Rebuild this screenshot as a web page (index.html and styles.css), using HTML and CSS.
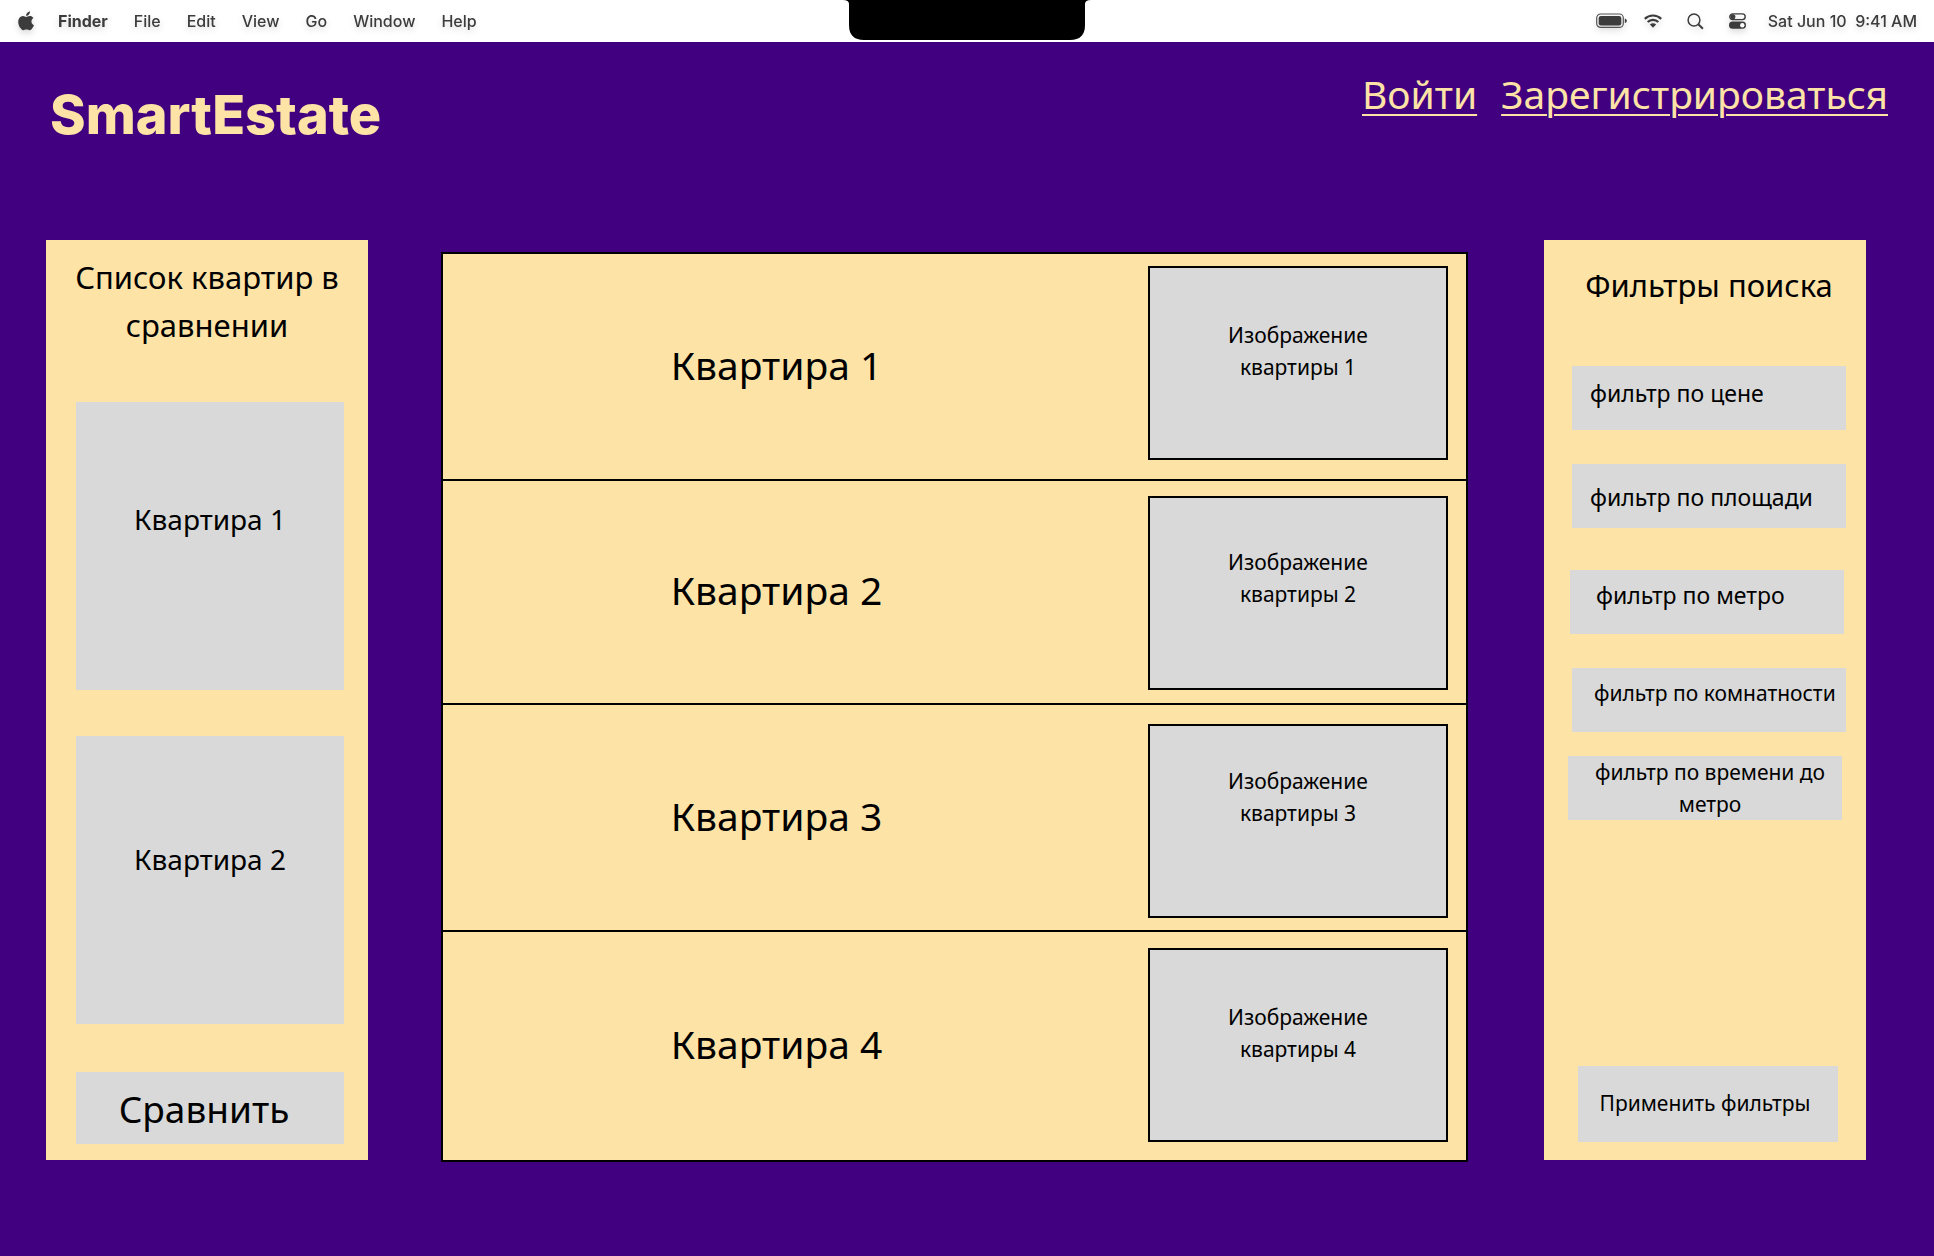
FILE: index.html
```html
<!DOCTYPE html>
<html lang="ru">
<head>
<meta charset="utf-8">
<meta name="viewport" content="width=device-width, initial-scale=1">
<title>SmartEstate</title>
<link rel="stylesheet" href="styles.css">
</head>
<body>
<div class="menubar">
  <nav class="menubar-menu" aria-label="Menu">
    <svg class="icon-apple" viewBox="0 0 16 20" aria-hidden="true"><path d="M13.3 10.7c0-1.9 1.5-2.8 1.6-2.9-.9-1.3-2.3-1.5-2.8-1.5-1.200-.1-2.300.7-2.900.7s-1.500-.7-2.500-.7c-1.300 0-2.500.8-3.100 1.900-1.400 2.300-.4 5.800.9 7.700.7.9 1.400 2 2.400 1.900 1 0 1.300-.6 2.500-.6s1.500.6 2.500.6 1.700-.9 2.300-1.900c.8-1.100 1-2.100 1.100-2.200 0 0-2-.8-2-3zM11.400 5c.5-.6.9-1.500.8-2.400-.8 0-1.700.5-2.300 1.200-.5.6-.9 1.500-.8 2.300.9.1 1.800-.4 2.300-1.100z" transform="matrix(1.270 0 0 1.230 -3.500 -2.700)"/></svg>
    <button class="menu-item menu-item-app">Finder</button>
    <button class="menu-item">File</button>
    <button class="menu-item">Edit</button>
    <button class="menu-item">View</button>
    <button class="menu-item">Go</button>
    <button class="menu-item">Window</button>
    <button class="menu-item">Help</button>
  </nav>
  <svg class="notch" viewBox="0 0 248 40" aria-hidden="true"><path d="M0 0H248Q242 0 242 4V25Q242 40 227 40H21Q6 40 6 25V4Q6 0 0 0Z"/></svg>
  <div class="menubar-status">
    <svg class="icon-battery" viewBox="0 0 31 16" aria-hidden="true"><rect x=".7" y="1" width="26.600" height="13.400" rx="4" fill="none" stroke="#555" stroke-width="1.200"/><rect x="2.700" y="3" width="22.600" height="9.400" rx="2.200"/><path d="M28.800 5.400c1.500.4 2 1.300 2 2.300s-.5 1.900-2 2.300z"/></svg>
    <svg class="icon-wifi" viewBox="0 0 18 14" aria-hidden="true"><g fill="none" stroke="#3c3c3c" stroke-width="2.200"><path d="M.8 4.900a11.600 11.600 0 0 1 16.400 0"/><path d="M3.700 8a7.500 7.500 0 0 1 10.600 0"/></g><path d="M9 13.800 5.900 10.600a4.400 4.400 0 0 1 6.200 0z"/></svg>
    <svg class="icon-search" viewBox="0 0 17 17" aria-hidden="true"><g fill="none" stroke="#3c3c3c"><circle cx="7" cy="7" r="5.900" stroke-width="1.500"/><path d="m11.300 11.300 4.600 4.400" stroke-width="2"/></g></svg>
    <svg class="icon-control" viewBox="0 0 17 16" aria-hidden="true"><rect x=".8" y=".9" width="15.400" height="5.700" rx="2.850" fill="none" stroke="#3c3c3c" stroke-width="1.400"/><circle cx="3.900" cy="3.750" r="2.500"/><rect x="0" y="8.600" width="17" height="7.200" rx="3.600"/><circle cx="13.300" cy="12.200" r="2.200" fill="#fff"/></svg>
    <time class="clock" datetime="06-10T09:41">Sat Jun 10&nbsp; 9:41 AM</time>
  </div>
</div>

<header class="header">
  <h1 class="logo">SmartEstate</h1>
  <nav class="auth">
    <a href="#login">Войти</a>
    <a href="#signup">Зарегистрироваться</a>
  </nav>
</header>

<div class="layout">
  <aside class="panel compare">
    <h2 class="panel-title">Список квартир в сравнении</h2>
    <div class="compare-card compare-card-first">Квартира 1</div>
    <div class="compare-card compare-card-second">Квартира 2</div>
    <button class="compare-button">Сравнить</button>
  </aside>

  <main class="listing">
    <article class="flat">
      <h3 class="flat-title">Квартира 1</h3>
      <div class="flat-image">Изображение<br>квартиры 1</div>
    </article>
    <article class="flat flat-second">
      <h3 class="flat-title">Квартира 2</h3>
      <div class="flat-image">Изображение<br>квартиры 2</div>
    </article>
    <article class="flat flat-third">
      <h3 class="flat-title">Квартира 3</h3>
      <div class="flat-image">Изображение<br>квартиры 3</div>
    </article>
    <article class="flat flat-fourth">
      <h3 class="flat-title">Квартира 4</h3>
      <div class="flat-image">Изображение<br>квартиры 4</div>
    </article>
  </main>

  <aside class="panel filters">
    <h2 class="panel-title">Фильтры поиска</h2>
    <button class="filter filter-price">фильтр по цене</button>
    <button class="filter filter-area">фильтр по площади</button>
    <button class="filter filter-metro">фильтр по метро</button>
    <button class="filter filter-rooms">фильтр по комнатности</button>
    <button class="filter filter-time">фильтр по времени до метро</button>
    <button class="apply-button">Применить фильтры</button>
  </aside>
</div>
</body>
</html>
```
FILE: styles.css
```css
* {
  box-sizing: border-box;
}

body {
  margin: 0;
  min-height: 100vh;
  background: #40007f;
  color: #000;
  font-family: "Noto Sans", sans-serif;
}

h1,
h2,
h3 {
  margin: 0;
  font-weight: 400;
}

button {
  margin: 0;
  padding: 0;
  border: 0;
  background: none;
  color: inherit;
  font: inherit;
  cursor: pointer;
}

/* System menu bar */
.menubar {
  position: relative;
  display: flex;
  justify-content: space-between;
  align-items: center;
  height: 42px;
  padding: 0 17px 0 18px;
  background: #fff;
  color: #3c3c3c;
  fill: #3c3c3c;
  font-family: Inter, sans-serif;
  font-size: 16px;
  font-weight: 500;
  line-height: 20px;
}

.menubar-menu,
.menubar-status {
  display: flex;
  align-items: center;
  filter: drop-shadow(0 3px 3px rgba(0, 0, 0, 0.15));
}

.menubar-menu {
  gap: 26px;
}

.menu-item-app {
  font-weight: 700;
}

.icon-apple {
  width: 16px;
  height: 20px;
  margin-right: -2px;
}

.notch {
  position: absolute;
  top: 0;
  left: 50%;
  width: 248px;
  height: 40px;
  margin-left: -124px;
  fill: #000;
}

.icon-battery {
  width: 31px;
  height: 16px;
  margin-right: 17px;
}

.icon-wifi {
  width: 18px;
  height: 14px;
  margin-right: 25px;
}

.icon-search {
  width: 17px;
  height: 17px;
  margin-right: 25px;
}

.icon-control {
  width: 17px;
  height: 16px;
  margin-right: 22px;
}

/* Site header */
.header {
  display: flex;
  justify-content: space-between;
  align-items: flex-start;
  height: 198px;
  padding: 26px 46px 0 50px;
  color: #fee3a7;
}

.logo {
  padding-top: 15px;
  font-family: Inter, sans-serif;
  font-size: 54px;
  font-weight: 800;
  line-height: 64px;
}

.auth {
  display: flex;
  gap: 24px;
  font-size: 39px;
  line-height: 52px;
}

.auth a {
  color: inherit;
  text-decoration-thickness: 2px;
  text-underline-offset: 5px;
}

/* Three-column layout */
.layout {
  display: grid;
  grid-template-columns: 322px 1fr 322px;
  align-items: start;
  padding: 0 68px 94px 46px;
}

.panel {
  display: flex;
  flex-direction: column;
  min-height: 920px;
  background: #fee3a7;
}

.panel-title {
  font-size: 31px;
  line-height: 48px;
  text-align: center;
}

/* Comparison list */
.compare {
  padding: 13px 24px 16px 30px;
}

.compare .panel-title {
  padding: 0 20px 0 14px;
  margin: 0 -20px 53px;
}

.compare-card {
  min-height: 288px;
  background: #d9d9d9;
  font-size: 28px;
  line-height: 40px;
  text-align: center;
}

.compare-card-first {
  padding-top: 97px;
  margin-bottom: 46px;
}

.compare-card-second {
  padding-top: 103px;
}

.compare-button {
  min-height: 72px;
  margin-top: auto;
  padding: 2px 12px 0 0;
  background: #d9d9d9;
  font-size: 37px;
  line-height: 48px;
}

/* Apartments */
.listing {
  display: grid;
  grid-template-rows: 227px 224px 227px 228px;
  margin: 12px 76px 0 73px;
  border: 2px solid #000;
  background: #fee3a7;
}

.flat {
  display: flex;
  align-items: flex-start;
  padding-right: 18px;
}

.flat:not(:last-child) {
  border-bottom: 2px solid #000;
}

.flat-title {
  flex: 1;
  align-self: center;
  padding: 0 38px 4px 0;
  font-size: 39px;
  line-height: 48px;
  text-align: center;
}

.flat-image {
  width: 300px;
  height: 194px;
  margin-top: 12px;
  padding-top: 51px;
  border: 2px solid #000;
  background: #d9d9d9;
  font-size: 21px;
  line-height: 32px;
  text-align: center;
}

.flat-second .flat-image {
  margin-top: 15px;
  padding-top: 48px;
}

.flat-third .flat-image {
  margin-top: 19px;
  padding-top: 39px;
}

.flat-fourth .flat-image {
  margin-top: 16px;
}

/* Search filters */
.filters {
  padding: 21px 20px 18px 28px;
}

.filters .panel-title {
  margin: 0 -4px 57px;
}

.filter {
  min-height: 64px;
  margin-bottom: 34px;
  background: #d9d9d9;
  font-size: 23px;
  line-height: 32px;
  text-align: left;
}

.filter-price {
  padding: 0 0 10px 18px;
}

.filter-area {
  padding: 2px 0 0 18px;
  margin-bottom: 42px;
}

.filter-metro {
  margin-left: -2px;
  margin-right: 2px;
  padding: 0 0 14px 26px;
}

.filter-rooms {
  margin-bottom: 24px;
  padding: 0 0 14px 22px;
  font-size: 21px;
}

.filter-time {
  margin: 0 4px 0 -4px;
  padding: 0 10px 0 20px;
  font-size: 21px;
  text-align: center;
}

.apply-button {
  min-height: 76px;
  margin: auto 8px 0 6px;
  padding: 0 6px 2px 0;
  background: #d9d9d9;
  font-size: 21px;
  line-height: 32px;
}
```
